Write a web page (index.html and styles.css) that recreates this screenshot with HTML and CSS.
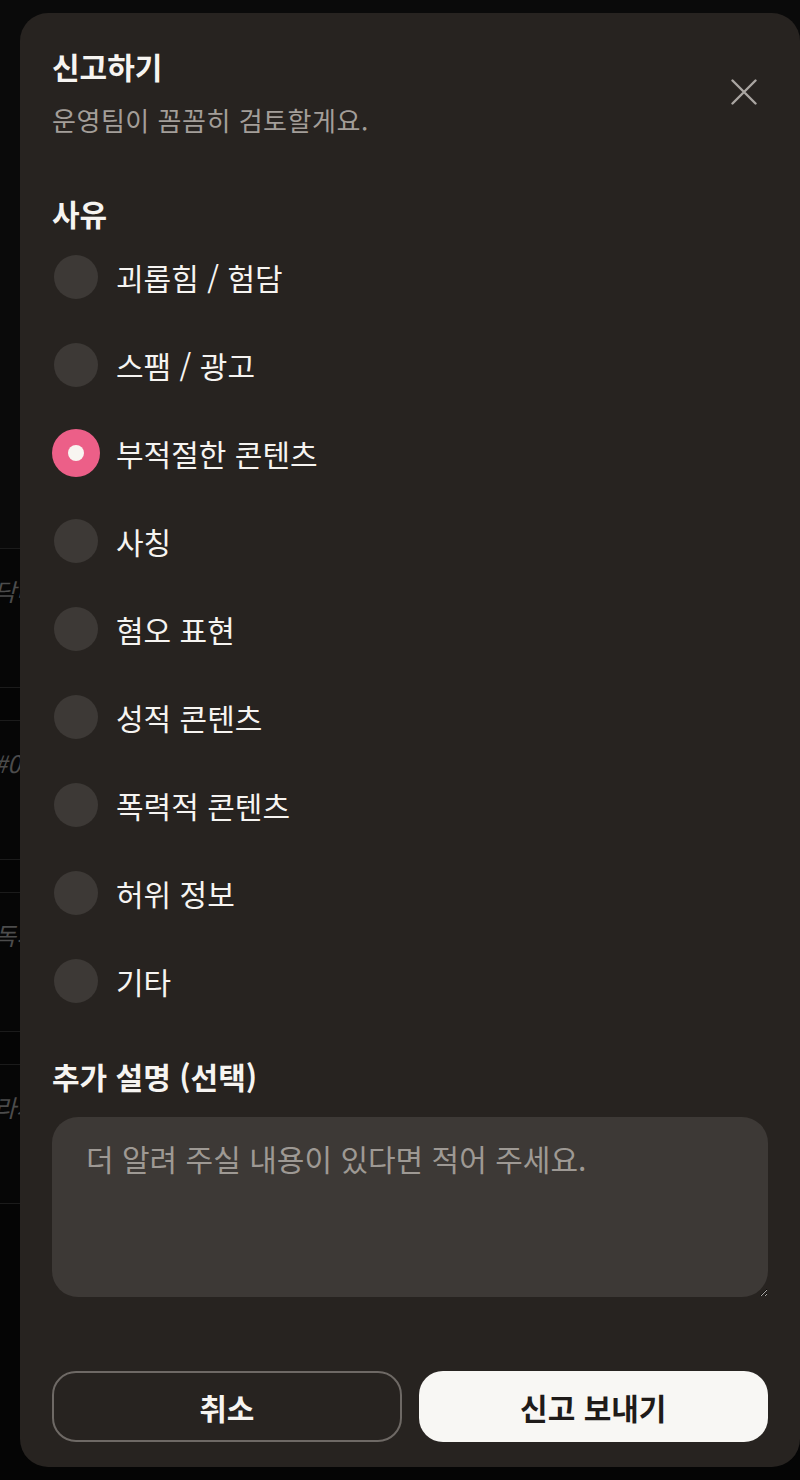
FILE: index.html
```html
<!DOCTYPE html>
<html lang="ko">
<head>
<meta charset="utf-8">
<title>신고하기</title>
<link rel="stylesheet" href="styles.css">
</head>
<body>
<div class="page">
  <div class="hero"></div>
  <div class="feed">
    <div class="feed-card"><span class="feed-text">닥터 스트레인지</span></div>
    <div class="feed-card"><span class="feed-text">#0 오늘의 추천</span></div>
    <div class="feed-card"><span class="feed-text">독서 모임</span></div>
    <div class="feed-card"><span class="feed-text">라챠 플레이리스트</span></div>
  </div>
</div>

<div class="modal" role="dialog" aria-labelledby="modal-title">
  <div class="modal-head">
    <div class="head-text">
      <h1 id="modal-title" class="title">신고하기</h1>
      <p class="subtitle">운영팀이 꼼꼼히 검토할게요.</p>
    </div>
    <button class="close" type="button" aria-label="닫기">
      <svg width="26" height="26" viewBox="0 0 26 26" fill="none" stroke="#aaa6a2" stroke-width="2.4" stroke-linecap="round">
        <path d="M1.5 1.5 L24.5 24.5 M24.5 1.5 L1.5 24.5"/>
      </svg>
    </button>
  </div>

  <h2 class="section-title reason-title">사유</h2>
  <ul class="options">
    <li class="option"><span class="radio"></span><span class="label">괴롭힘 / 험담</span></li>
    <li class="option"><span class="radio"></span><span class="label">스팸 / 광고</span></li>
    <li class="option"><span class="radio checked"></span><span class="label">부적절한 콘텐츠</span></li>
    <li class="option"><span class="radio"></span><span class="label">사칭</span></li>
    <li class="option"><span class="radio"></span><span class="label">혐오 표현</span></li>
    <li class="option"><span class="radio"></span><span class="label">성적 콘텐츠</span></li>
    <li class="option"><span class="radio"></span><span class="label">폭력적 콘텐츠</span></li>
    <li class="option"><span class="radio"></span><span class="label">허위 정보</span></li>
    <li class="option"><span class="radio"></span><span class="label">기타</span></li>
  </ul>

  <h2 class="section-title extra-title">추가 설명 (선택)</h2>
  <textarea class="note" placeholder="더 알려 주실 내용이 있다면 적어 주세요."></textarea>

  <div class="actions">
    <button class="btn btn-cancel" type="button">취소</button>
    <button class="btn btn-submit" type="button">신고 보내기</button>
  </div>
</div>
</body>
</html>
```

FILE: styles.css
```css
* { box-sizing: border-box; }

html, body {
  margin: 0;
  padding: 0;
  background: #050505;
  font-family: "Noto Sans CJK KR", "Noto Sans", sans-serif;
}

.page {
  width: 800px;
  min-height: 1480px;
  overflow: hidden;
}

.hero {
  height: 548px;
  background: #0a0a0a;
}

.feed {
  display: flex;
  flex-direction: column;
  gap: 32px;
}

.feed-card {
  height: 140px;
  border-top: 1px solid #1b1b1b;
  border-bottom: 1px solid #1b1b1b;
  padding-top: 24px;
  background: #060606;
}

.feed-text {
  display: block;
  margin-left: -6px;
  font-size: 24px;
  color: #4c4c4c;
  font-style: italic;
}

.modal {
  position: absolute;
  left: 20px;
  top: 13px;
  width: 780px;
  height: 1454px;
  background: #272320;
  border-radius: 28px;
  padding: 33px 32px 25px 32px;
  display: flex;
  flex-direction: column;
  color: #f6f4f1;
}

.modal-head {
  display: flex;
  align-items: center;
  justify-content: space-between;
}

.title {
  margin: 0;
  font-size: 30px;
  line-height: 40px;
  font-weight: 700;
  color: #f6f4f1;
}

.subtitle {
  margin: 16px 0 0 0;
  font-size: 26px;
  line-height: 35px;
  letter-spacing: 0.02em;
  color: #a39e99;
}

.close {
  width: 48px;
  height: 48px;
  border: 0;
  padding: 0;
  background: transparent;
  display: flex;
  align-items: center;
  justify-content: center;
}

.section-title {
  margin: 0;
  font-size: 30px;
  line-height: 40px;
  font-weight: 700;
  color: #f6f4f1;
}

.reason-title { margin-top: 56px; }

.options {
  list-style: none;
  margin: 0;
  padding: 0;
}

.option {
  height: 88px;
  display: flex;
  align-items: center;
  gap: 16px;
}

.radio {
  width: 48px;
  height: 48px;
  border-radius: 50%;
  padding: 2px;
  background: #3d3936;
  background-clip: content-box;
  flex: none;
  display: flex;
  align-items: center;
  justify-content: center;
}

.radio.checked {
  padding: 0;
  background: #ec5f88;
}

.radio.checked::after {
  content: "";
  width: 16px;
  height: 16px;
  border-radius: 50%;
  background: #f8f5f1;
}

.label {
  font-size: 30px;
  line-height: 40px;
  color: #f6f4f1;
}

.extra-title { margin-top: 31px; }

.note {
  margin-top: 21px;
  width: 100%;
  height: 180px;
  background: #3d3936;
  border: 0;
  border-radius: 26px;
  padding: 19px 34px;
  font-family: "Noto Sans CJK KR", "Noto Sans", sans-serif;
  font-size: 30px;
  line-height: 44px;
  color: #f6f4f1;
  outline: none;
}

.note::placeholder { color: #9e9994; }

.actions {
  margin-top: 74px;
  display: grid;
  grid-template-columns: 1fr 1fr;
  gap: 17px;
}

.btn {
  height: 71px;
  border-radius: 24px;
  font-family: "Noto Sans CJK KR", "Noto Sans", sans-serif;
  font-size: 30px;
  font-weight: 700;
}

.btn-cancel {
  background: transparent;
  border: 2px solid #6e6965;
  color: #f6f4f1;
}

.btn-submit {
  background: #f8f7f4;
  border: 0;
  color: #1f1b19;
}
```
